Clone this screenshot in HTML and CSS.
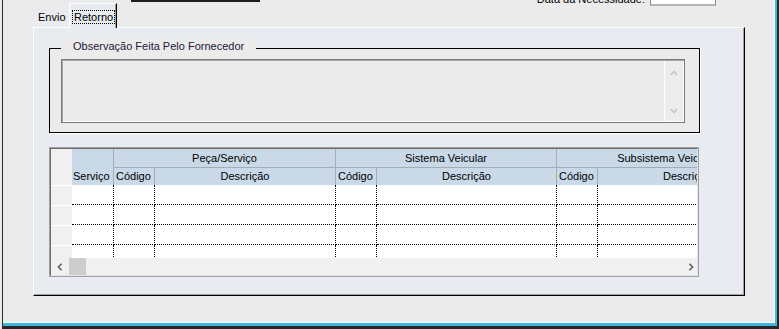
FILE: index.html
```html
<!DOCTYPE html>
<html lang="pt-BR">
<head>
<meta charset="utf-8">
<title>Retorno</title>
<link rel="stylesheet" href="styles.css">
</head>
<body>
<div class="window">
  <div class="frame">
    <div class="client">
      <div class="toprow">
        <div class="tab tab-envio">Envio</div>
        <div class="tab tab-active"><span class="focus">Retorno</span></div>
        <div class="topbox"></div>
        <div class="datefield">
          <span class="datelabel">Data da Necessidade:</span>
          <span class="dateinput"></span>
        </div>
      </div>
      <div class="panel">
        <div class="group">
          <div class="legend">Observação Feita Pelo Fornecedor</div>
          <div class="memo">
            <div class="memo-text"></div>
            <div class="vscroll">
              <svg class="varrow" width="8" height="6" viewBox="0 0 8 6"><polyline points="0.8,4.8 4,1.6 7.2,4.8" fill="none" stroke="#c3c3c3" stroke-width="1.6"/></svg>
              <svg class="varrow" width="8" height="6" viewBox="0 0 8 6"><polyline points="0.8,1.2 4,4.4 7.2,1.2" fill="none" stroke="#c3c3c3" stroke-width="1.6"/></svg>
            </div>
          </div>
        </div>
        <div class="grid">
          <div class="grid-in">
            <div class="grid-head">
              <div class="h-ind"></div>
              <div class="h h-servico">Serviço</div>
              <div class="h h-group g1">Peça/Serviço</div>
              <div class="h h-group g2">Sistema Veicular</div>
              <div class="h h-group g3">Subsistema Veicular</div>
              <div class="h h-sub h-left">Código</div>
              <div class="h h-sub">Descrição</div>
              <div class="h h-sub h-left">Código</div>
              <div class="h h-sub">Descrição</div>
              <div class="h h-sub h-left">Código</div>
              <div class="h h-sub">Descrição</div>
            </div>
            <div class="grid-body">
              <div class="row"><div class="c-ind"></div><div class="c"></div><div class="c"></div><div class="c"></div><div class="c"></div><div class="c"></div><div class="c"></div><div class="c"></div></div>
              <div class="row"><div class="c-ind"></div><div class="c"></div><div class="c"></div><div class="c"></div><div class="c"></div><div class="c"></div><div class="c"></div><div class="c"></div></div>
              <div class="row"><div class="c-ind"></div><div class="c"></div><div class="c"></div><div class="c"></div><div class="c"></div><div class="c"></div><div class="c"></div><div class="c"></div></div>
              <div class="row"><div class="c-ind"></div><div class="c"></div><div class="c"></div><div class="c"></div><div class="c"></div><div class="c"></div><div class="c"></div><div class="c"></div></div>
            </div>
            <div class="hscroll">
              <svg class="harrow" width="6" height="8" viewBox="0 0 6 8"><polyline points="4.6,0.8 1.4,4 4.6,7.2" fill="none" stroke="#5f5f5f" stroke-width="1.6"/></svg>
              <div class="thumb"></div>
              <div class="hspacer"></div>
              <svg class="harrow" width="6" height="8" viewBox="0 0 6 8"><polyline points="1.4,0.8 4.6,4 1.4,7.2" fill="none" stroke="#5f5f5f" stroke-width="1.6"/></svg>
            </div>
          </div>
        </div>
      </div>
    </div>
  </div>
</div>
</body>
</html>
```
FILE: styles.css
```css
* { box-sizing: border-box; }

html, body {
  margin: 0;
  padding: 0;
  background: #ebebeb;
  overflow: hidden;
}

body {
  font-family: "Liberation Sans", Arial, sans-serif;
  font-size: 11px;
  color: #000;
}

.window {
  margin-left: 2px;
  width: 777px;
  height: 329px;
  border-left: 1px solid #2d2d2d;
  border-right: 2px solid #262626;
  border-bottom: 3px solid #262626;
}

.frame {
  height: 100%;
  border-right: 2px solid #3db6e2;
  border-bottom: 3px solid #3db6e2;
}

.client {
  height: 100%;
  background: #ebebeb;
  border-right: 1px solid #ffffff;
  border-bottom: 1px solid #ffffff;
  overflow: hidden;
}

/* ---------- top row with tabs ---------- */
.toprow {
  display: flex;
  align-items: flex-start;
  height: 27px;
  padding-left: 32px;
}

.tab {
  line-height: 12px;
  white-space: nowrap;
}

.tab-envio {
  margin-top: 6px;
  width: 34px;
  height: 21px;
  padding: 5px 0 0 3px;
  background: #e9ebee;
}

.tab-active {
  position: relative;
  z-index: 2;
  margin-top: 3px;
  height: 25px;
  padding: 6px 1px 0 2px;
  background: #e8ecf0;
  border-top: 1px solid #ffffff;
  border-left: 1px solid #ffffff;
  border-right: 1px solid #000000;
  box-shadow: inset -1px 0 0 #a0a0a0;
}

.focus {
  display: inline-block;
  border: 1px dotted #000;
  padding: 0 1px 0 1px;
  line-height: 12px;
}

.topbox {
  margin-left: 14px;
  margin-top: -6px;
  width: 129px;
  height: 8px;
  border-right: 1px solid #1e1e1e;
  border-bottom: 2px solid #1e1e1e;
}

.datefield {
  margin-left: auto;
  margin-right: 58px;
  display: flex;
  align-items: flex-start;
  gap: 5px;
}

.datelabel {
  margin-top: -7px;
  line-height: 13px;
  white-space: nowrap;
}

.dateinput {
  display: block;
  margin-top: -13px;
  width: 66px;
  height: 19px;
  background: #ffffff;
  border: 1px solid #8a8a8a;
  border-bottom: 2px solid #b4b4b4;
}

/* ---------- tab panel ---------- */
.panel {
  margin-left: 30px;
  width: 712px;
  height: 269px;
  background: #e8ecf0;
  border-top: 1px solid #ffffff;
  border-left: 1px solid #ffffff;
  border-right: 1px solid #000000;
  border-bottom: 1px solid #000000;
  box-shadow: inset -1px -1px 0 #a0a0a0;
  padding: 20px 0 0 15px;
}

/* ---------- group box ---------- */
.group {
  width: 651px;
  border: 1px solid #000;
  box-shadow: 1px 1px 0 #ffffff;
  background: #ebebeb;
  padding: 0 14px 9px 11px;
}

.legend {
  width: fit-content;
  margin-top: -11px;
  height: 17px;
  line-height: 17px;
  padding: 0 12px;
  background: #ebebeb;
  color: #1c2038;
  white-space: nowrap;
}

.memo {
  margin-top: 4px;
  display: flex;
  height: 64px;
  border: 1px solid #7a7a7a;
  background: #ebebeb;
  box-shadow: inset 1px 1px 0 #a8a8a8, inset -1px -1px 0 #ffffff;
  padding: 1px;
}

.memo-text {
  flex: 1;
}

.vscroll {
  width: 19px;
  border-left: 1px solid #ffffff;
  background: #ededed;
  display: flex;
  flex-direction: column;
  justify-content: space-between;
  align-items: center;
  padding: 9px 0 7px 0;
}

.varrow { display: block; }

/* ---------- data grid ---------- */
.grid {
  margin-top: 14px;
  width: 650px;
  height: 130px;
  border: 1px solid #a0a0a0;
}

.grid-in {
  height: 100%;
  border-top: 1px solid #6b6b6b;
  border-left: 1px solid #6b6b6b;
  border-right: 1px solid #e4e4e4;
  border-bottom: 1px solid #e4e4e4;
  overflow: hidden;
  background: #ffffff;
}

.grid-head,
.row {
  display: grid;
  grid-template-columns: 21px 42px 41px 181px 41px 180px 41px 180px;
  width: max-content;
}

.grid-head {
  grid-template-rows: 19px 17px;
}

.h-ind {
  grid-row: 1 / 3;
  grid-column: 1;
  background: #f0f0f0;
}

.h {
  background: #c9d9e8;
  border-right: 1px solid #a3adb7;
  white-space: nowrap;
  overflow: hidden;
  line-height: 13px;
  display: flex;
  align-items: center;
  justify-content: center;
}

.h-servico {
  grid-row: 1 / 3;
  grid-column: 2;
  justify-content: flex-start;
  align-items: flex-end;
  padding: 0 0 2px 1px;
}

.h-group {
  border-bottom: 1px solid #a3adb7;
  padding-top: 1px;
}

.g1 { grid-column: 3 / 5; grid-row: 1; }
.g2 { grid-column: 5 / 7; grid-row: 1; }
.g3 { grid-column: 7 / 9; grid-row: 1; }

.h-sub { grid-row: 2; }

.h-left {
  justify-content: flex-start;
  padding-left: 2px;
}

.grid-body {
  height: 73px;
  overflow: hidden;
}

.row {
  height: 20px;
}

.c-ind {
  background: #f0f0f0;
  border-top: 1px solid #ffffff;
}

.c {
  border-right: 1px dotted #000;
  border-bottom: 1px dotted #000;
}

.hscroll {
  height: 17px;
  background: #f0f0f0;
  display: flex;
  align-items: center;
  padding: 0 3px 0 6px;
}

.harrow { display: block; }

.thumb {
  margin-left: 6px;
  width: 17px;
  height: 17px;
  background: #cdcdcd;
}

.hspacer { flex: 1; }
```
